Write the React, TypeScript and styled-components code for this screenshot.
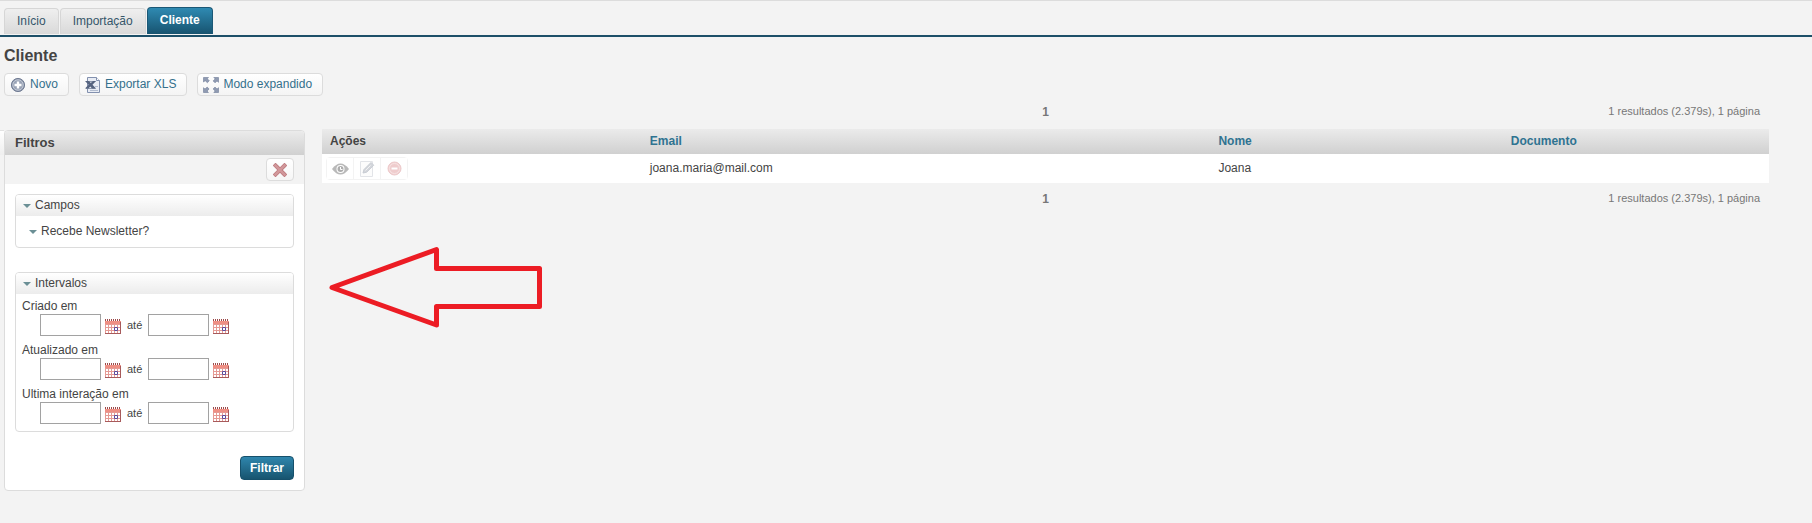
import React from "react";
import styled, { createGlobalStyle, css } from "styled-components";

const GlobalStyle = createGlobalStyle`
  *, *::before, *::after { box-sizing: border-box; }
  body {
    margin: 0;
    background: #f3f3f3;
    color: #444;
    font-family: "Liberation Sans", Arial, sans-serif;
    font-size: 12px;
    line-height: 16px;
  }
  button, input { font: inherit; color: inherit; }
`;

const Page = styled.div`
  border-top: 1px solid #dcdcdc;
`;

const TabBar = styled.nav`
  display: flex;
  align-items: flex-end;
  gap: 1px;
  height: 36px;
  padding: 0 4px 1px;
  border-bottom: 2px solid #1c4f68;
`;

const Tab = styled.a<{ $active?: boolean }>`
  display: flex;
  align-items: center;
  height: 26px;
  padding: 0 12px 2px;
  border: 1px solid #d6d6d6;
  border-bottom: 0;
  border-radius: 4px 4px 0 0;
  background: linear-gradient(#efefef, #d9d9d9);
  color: #35566a;
  text-decoration: none;
  ${(p) =>
    p.$active &&
    css`
      height: 27px;
      border-color: #1b5876;
      background: linear-gradient(#2f8ab2, #17536f);
      color: #fff;
      font-weight: bold;
    `}
`;

const PageTitle = styled.h1`
  margin: 9px 4px 7px;
  font-size: 16px;
  line-height: 20px;
`;

const Toolbar = styled.div`
  display: flex;
  gap: 10px;
  padding: 0 4px;
`;

const ToolButton = styled.button`
  display: flex;
  align-items: center;
  gap: 4px;
  height: 23px;
  padding: 0 10px 2px 5px;
  border: 1px solid #dcdcdc;
  border-radius: 4px;
  background: linear-gradient(#fff, #f4f4f4);
  color: #34708c;
  cursor: pointer;

  svg { margin-top: 2px; }
`;

const Content = styled.div`
  display: flex;
  align-items: flex-start;
`;

const CollapsedEdge = styled.div`
  flex: none;
  width: 4px;
  height: 25px;
  margin-top: 34px;
  border-top: 1px solid #e2e2e2;
  background: linear-gradient(#fff, #efefef);
`;

const FilterPanel = styled.form`
  flex: none;
  width: 301px;
  margin: 34px 17px 0 0;
  border: 1px solid #dcdcdc;
  border-radius: 4px;
  background: #fff;
`;

const PanelTitle = styled.h2`
  margin: 0;
  padding: 0 10px;
  border-radius: 3px 3px 0 0;
  background: linear-gradient(#ebebeb, #d0d0d0);
  font-size: 13px;
  line-height: 24px;
`;

const PanelTools = styled.div`
  display: flex;
  justify-content: flex-end;
  padding: 3px 10px;
  background: #f3f3f3;
`;

const ClearButton = styled.button`
  display: flex;
  align-items: center;
  justify-content: center;
  width: 28px;
  height: 23px;
  padding: 0;
  border: 1px solid #dcdcdc;
  border-radius: 4px;
  background: linear-gradient(#fff, #f6f6f6);
  cursor: pointer;
`;

const PanelBody = styled.div`
  display: flex;
  flex-direction: column;
  gap: 24px;
  padding: 10px;
`;

const Group = styled.section`
  border: 1px solid #dcdcdc;
  border-radius: 4px;
`;

const Toggle = styled.button<{ $nested?: boolean }>`
  display: flex;
  align-items: center;
  gap: 4px;
  width: 100%;
  border: 0;
  text-align: left;
  cursor: pointer;
  height: ${(p) => (p.$nested ? "31px" : "21px")};
  padding: 0 ${(p) => (p.$nested ? "13px" : "7px")} 1px;
  border-radius: 3px 3px 0 0;
  background: ${(p) => (p.$nested ? "none" : "linear-gradient(#fff, #ececec)")};

  &::before {
    content: "";
    margin-top: 2px;
    border: 4px solid transparent;
    border-top-color: #6b8f95;
    border-bottom: 0;
  }
`;

const Ranges = styled.div`
  display: flex;
  flex-direction: column;
  gap: 6px;
  padding: 4px 6px 7px;
`;

const RangeLabel = styled.label`
  display: block;
`;

const RangeRow = styled.div`
  display: flex;
  align-items: center;
  gap: 4px;
  padding-left: 18px;
`;

const DateInput = styled.input`
  width: 61px;
  height: 22px;
  padding: 0 4px;
  border: 1px solid #a2a2a2;
  background: #fff;
`;

const UntilLabel = styled.label`
  width: 17px;
  margin-left: 2px;
  font-size: 11px;
`;

const IconButton = styled.button`
  display: flex;
  padding: 3px 0 0;
  border: 0;
  background: none;
  cursor: pointer;
`;

const SubmitButton = styled.button`
  align-self: flex-end;
  height: 24px;
  padding: 0 9px 1px;
  border: 1px solid #16506b;
  border-radius: 4px;
  background: linear-gradient(#2f86ad, #17546f);
  color: #fff;
  font-weight: bold;
  cursor: pointer;
`;

const Results = styled.main`
  position: relative;
  flex: 1;
  min-width: 0;
  margin-right: 43px;
`;

const Pager = styled.div`
  display: grid;
  grid-template-columns: 1fr auto 1fr;
  align-items: center;
  height: 33px;
  padding: 0 9px 1px;
  color: #777;
`;

const PageNumber = styled.strong`
  grid-column: 2;
`;

const Summary = styled.span`
  justify-self: end;
  padding-bottom: 2px;
  font-size: 11px;
`;

const Table = styled.table`
  width: 100%;
  table-layout: fixed;
  border-collapse: collapse;
  background: #fff;

  thead { background: linear-gradient(#ebebeb, #d0d0d0); }
`;

const HeadCell = styled.th<{ $width?: string }>`
  width: ${(p) => p.$width ?? "auto"};
  height: 25px;
  padding: 0 8px 2px;
  text-align: left;
`;

const SortLink = styled.a`
  color: #2f7391;
  text-decoration: none;
`;

const Cell = styled.td`
  height: 29px;
  padding: 0 8px 2px;
`;

const ActionCell = styled(Cell)`
  padding: 0 4px;
`;

const Actions = styled.div`
  display: flex;
  width: max-content;
  border: 1px solid #f3f3f3;
  border-radius: 4px;
`;

const ActionButton = styled.button`
  display: flex;
  align-items: center;
  justify-content: center;
  width: 26px;
  height: 21px;
  padding: 0;
  border: 0;
  background: #fff;
  cursor: pointer;

  & + & {
    width: 27px;
    border-left: 1px solid #f3f3f3;
  }
`;

const Arrow = styled.svg`
  position: absolute;
  top: 146px;
  left: 6px;
  pointer-events: none;
`;

const PlusIcon = () => (
  <svg width="16" height="16" viewBox="0 0 16 16" aria-hidden="true">
    <circle cx="8" cy="8" r="6.600" fill="#8993a8" stroke="#737e95" />
    <circle cx="8" cy="8" r="5.200" fill="#98a2b5" stroke="#c3cad6" />
    <path d="M8 4.500v7M4.500 8h7" stroke="#fff" strokeWidth="2.400" />
  </svg>
);

const SheetIcon = () => (
  <svg width="16" height="16" viewBox="0 0 16 16" aria-hidden="true">
    <path d="M2.500.5h9l3 3v12h-12z" fill="#e8ecf4" stroke="#8290ae" />
    <path d="M11.500.5v3h3" fill="#fff" stroke="#8290ae" />
    <path d="M10 9.500h3M5 13.500h8" stroke="#b2bccf" />
    <path d="M1 4.500h9.500M1 11.500h9.500" stroke="#8c97ad" />
    <path d="M0 4h4l1.800 2L8 4h3L7.500 7.800 11 11.500H7L5.300 9.600 3.500 11.500H0l3.600-3.700z" fill="#566480" />
  </svg>
);

const ExpandIcon = () => (
  <svg width="16" height="16" viewBox="0 0 16 16" aria-hidden="true">
    <g fill="#909bb2" stroke="#6f7c98" strokeWidth=".6">
      <path d="M.5.5h5L4.300 1.800l2 2-1.900 1.900-2.200-2L.5 5z" />
      <path d="M15.500.5v4.800l-1.500-1.400-2 1.900-1.900-1.900 2.100-2L10.800.5z" />
      <path d="M.5 15.500v-4.800L2 12.100l2.200-2 1.900 1.900-2 2 1.300 1.500z" />
      <path d="M15.500 15.500h-4.700l1.400-1.500-2.100-2 1.900-1.900 2 2 1.500-1.400z" />
    </g>
  </svg>
);

const CrossIcon = () => (
  <svg width="14" height="14" viewBox="0 0 14 14" aria-hidden="true">
    <path d="M2.500 2.500l9 9M11.500 2.500l-9 9" stroke="#bf7c80" strokeWidth="4" strokeLinecap="square" />
    <path d="M2.500 2.500l9 9M11.500 2.500l-9 9" stroke="#d2989b" strokeWidth="2.400" strokeLinecap="square" />
  </svg>
);

const CalendarIcon = () => (
  <svg width="16" height="16" viewBox="0 0 16 16" aria-hidden="true">
    <path d="M0 2h16v13H0z" fill="#e59a94" />
    <path d="M0 2h16v3H0z" fill="#ee8f84" />
    <path d="M0 1h16" stroke="#9c4a4a" strokeWidth="2" strokeDasharray="1 1" />
    <path d="M1 6h2v2H1zM4 6h2v2H4zM7 6h2v2H7zM10 6h2v2h-2zM13 6h2v2h-2zM1 9h2v2H1zM4 9h2v2H4zM7 9h2v2H7zM13 9h2v2h-2zM1 12h2v2H1zM4 12h2v2H4zM7 12h2v2H7zM10 12h2v2h-2zM13 12h2v2h-2z" fill="#fff" />
    <path d="M9.500 8.500h3v3h-3z" fill="#fff" stroke="#5b4b9b" />
    <path d="M0 14.500h16M15.500 3v12" stroke="#a75a5b" />
  </svg>
);

const EyeIcon = () => (
  <svg width="17" height="12" viewBox="0 0 17 12" aria-hidden="true">
    <path d="M0 6Q8.500-5 17 6 8.500 17 0 6z" fill="#b9b9b9" />
    <circle cx="8.500" cy="6" r="4" fill="#fff" />
    <circle cx="8.500" cy="6" r="3" fill="#adadad" />
    <path d="M8.500 4v2.500h2" stroke="#fff" fill="none" />
  </svg>
);

const EditIcon = () => (
  <svg width="16" height="16" viewBox="0 0 16 16" aria-hidden="true">
    <path d="M1.500.5h12v15h-12z" fill="#fcfcfc" stroke="#e2e4e8" />
    <path d="M4 12l1-3.500L12 1.500l2.700 2.700-7 7z" fill="#d3d6db" stroke="#c8ccd3" />
    <path d="M6.500 9.500l5-5" stroke="#f2f2f4" />
  </svg>
);

const RemoveIcon = () => (
  <svg width="15" height="15" viewBox="0 0 15 15" aria-hidden="true">
    <circle cx="7.500" cy="7.500" r="6.500" fill="#f2d2d3" stroke="#ecc8c9" />
    <circle cx="7.500" cy="7.500" r="5" fill="#efcccd" stroke="#f7e2e2" />
    <path d="M4.500 7.500h6" stroke="#fff" strokeWidth="2" />
  </svg>
);

const ranges = [
  { id: "criado", label: "Criado em" },
  { id: "atualizado", label: "Atualizado em" },
  { id: "interacao", label: "Ultima interação em" },
];

const clients = [{ email: "joana.maria@mail.com", name: "Joana", document: "" }];

const Pagination = () => (
  <Pager>
    <PageNumber>1</PageNumber>
    <Summary>1 resultados (2.379s), 1 página</Summary>
  </Pager>
);

export default function App() {
  return (
    <Page>
      <GlobalStyle />
      <TabBar>
        <Tab href="#inicio">Início</Tab>
        <Tab href="#importacao">Importação</Tab>
        <Tab href="#cliente" $active>Cliente</Tab>
      </TabBar>
      <PageTitle>Cliente</PageTitle>
      <Toolbar>
        <ToolButton type="button"><PlusIcon />Novo</ToolButton>
        <ToolButton type="button"><SheetIcon />Exportar XLS</ToolButton>
        <ToolButton type="button"><ExpandIcon />Modo expandido</ToolButton>
      </Toolbar>
      <Content>
        <CollapsedEdge />
        <FilterPanel onSubmit={(e) => e.preventDefault()}>
          <PanelTitle>Filtros</PanelTitle>
          <PanelTools>
            <ClearButton type="reset" aria-label="Limpar filtros"><CrossIcon /></ClearButton>
          </PanelTools>
          <PanelBody>
            <Group>
              <Toggle type="button">Campos</Toggle>
              <Toggle type="button" $nested>Recebe Newsletter?</Toggle>
            </Group>
            <Group>
              <Toggle type="button">Intervalos</Toggle>
              <Ranges>
                {ranges.map((r) => (
                  <div key={r.id}>
                    <RangeLabel htmlFor={`${r.id}-de`}>{r.label}</RangeLabel>
                    <RangeRow>
                      <DateInput id={`${r.id}-de`} type="text" />
                      <IconButton type="button" aria-label="Escolher data inicial"><CalendarIcon /></IconButton>
                      <UntilLabel htmlFor={`${r.id}-ate`}>até</UntilLabel>
                      <DateInput id={`${r.id}-ate`} type="text" />
                      <IconButton type="button" aria-label="Escolher data final"><CalendarIcon /></IconButton>
                    </RangeRow>
                  </div>
                ))}
              </Ranges>
            </Group>
            <SubmitButton type="submit">Filtrar</SubmitButton>
          </PanelBody>
        </FilterPanel>
        <Results>
          <Pagination />
          <Table>
            <thead>
              <tr>
                <HeadCell $width="22.1%">Ações</HeadCell>
                <HeadCell $width="39.3%"><SortLink href="#email">Email</SortLink></HeadCell>
                <HeadCell $width="20.2%"><SortLink href="#nome">Nome</SortLink></HeadCell>
                <HeadCell><SortLink href="#documento">Documento</SortLink></HeadCell>
              </tr>
            </thead>
            <tbody>
              {clients.map((c) => (
                <tr key={c.email}>
                  <ActionCell>
                    <Actions>
                      <ActionButton type="button" aria-label="Visualizar"><EyeIcon /></ActionButton>
                      <ActionButton type="button" aria-label="Editar"><EditIcon /></ActionButton>
                      <ActionButton type="button" aria-label="Remover"><RemoveIcon /></ActionButton>
                    </Actions>
                  </ActionCell>
                  <Cell>{c.email}</Cell>
                  <Cell>{c.name}</Cell>
                  <Cell>{c.document}</Cell>
                </tr>
              ))}
            </tbody>
          </Table>
          <Pagination />
          <Arrow width="216" height="88" viewBox="0 0 216 88" aria-hidden="true">
            <path
              d="M4 45.500L108.500 7.500V26.500H211.500V64.500H108.500V83z"
              fill="none"
              stroke="#ec1c24"
              strokeWidth="5"
              strokeLinejoin="round"
            />
          </Arrow>
        </Results>
      </Content>
    </Page>
  );
}
